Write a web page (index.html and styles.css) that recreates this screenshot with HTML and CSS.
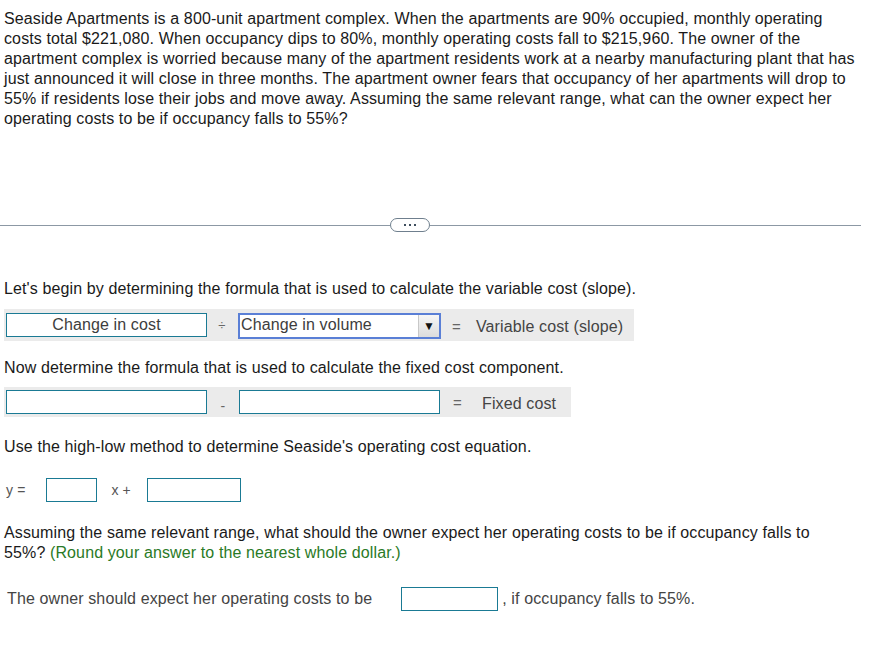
FILE: index.html
```html
<!DOCTYPE html>
<html>
<head>
<meta charset="utf-8">
<link rel="stylesheet" href="styles.css">
</head>
<body>
<div class="page">
  <p class="problem">Seaside Apartments is a 800-unit apartment complex. When the apartments are 90% occupied, monthly operating costs total $221,080. When occupancy dips to 80%, monthly operating costs fall to $215,960. The owner of the apartment complex is worried because many of the apartment residents work at a nearby manufacturing plant that has just announced it will close in three months. The apartment owner fears that occupancy of her apartments will drop to 55% if residents lose their jobs and move away. Assuming the same relevant range, what can the owner expect her operating costs to be if occupancy falls to 55%?</p>

  <div class="sep">
    <div class="sep-line"></div>
    <div class="pill"><span></span><span></span><span></span></div>
    <div class="sep-line grow"></div>
  </div>

  <p class="q q1">Let's begin by determining the formula that is used to calculate the variable cost (slope).</p>
  <div class="row row1">
    <div class="box box-cost">Change in cost</div>
    <span class="op op-div">÷</span>
    <div class="select">
      <span class="select-text">Change in volume</span>
      <span class="select-arrow">▼</span>
    </div>
    <span class="op op-eq">=</span>
    <span class="result">Variable cost (slope)</span>
  </div>

  <p class="q q2">Now determine the formula that is used to calculate the fixed cost component.</p>
  <div class="row row2">
    <div class="box box-wide"></div>
    <span class="op op-minus">-</span>
    <div class="box box-wide"></div>
    <span class="op op-eq2">=</span>
    <span class="result result2">Fixed cost</span>
  </div>

  <p class="q q3">Use the high-low method to determine Seaside's operating cost equation.</p>
  <div class="eq">
    <span class="small">y =</span>
    <div class="box box-a"></div>
    <span class="small xplus">x +</span>
    <div class="box box-b"></div>
  </div>

  <p class="q q4">Assuming the same relevant range, what should the owner expect her operating costs to be if occupancy falls to 55%? <span class="green">(Round your answer to the nearest whole dollar.)</span></p>

  <div class="final">
    <span class="gray">The owner should expect her operating costs to be</span>
    <div class="box box-final"></div>
    <span class="gray">, if occupancy falls to 55%.</span>
  </div>
</div>
</body>
</html>
```

FILE: styles.css
```css
* { box-sizing: border-box; }
body {
  margin: 0;
  background: #fff;
  font-family: "Liberation Sans", Arial, sans-serif;
  font-size: 16px;
  letter-spacing: 0.12px;
  color: #1a1a1a;
}
.page {
  padding: 9px 0 0 4px;
  width: 874px;
}
p { margin: 0; line-height: 20px; }
.problem { width: 856px; }

.sep {
  display: flex;
  align-items: center;
  margin-top: 89px;
  margin-left: -4px;
  width: 861px;
  height: 14px;
}
.sep-line { height: 1px; background: #8c98a4; width: 390px; }
.sep-line.grow { flex: 1; width: auto; }
.pill {
  width: 40px;
  height: 14px;
  border: 1px solid #6f7f8e;
  border-radius: 7px;
  background: #fff;
  display: flex;
  align-items: center;
  justify-content: center;
  gap: 3px;
}
.pill span { width: 2px; height: 2px; background: #3f4f5f; }

.q1 { margin-top: 47px; }
.row {
  display: flex;
  align-items: center;
  background: #ebebeb;
  margin-top: 10px;
  height: 32px;
  padding-left: 2px;
}
.row1 { width: 630px; }
.row2 { width: 567px; height: 30px; margin-top: 9px; }
.box {
  border: 1px solid #1a7a94;
  background: #fff;
  height: 24px;
}
.box-cost {
  width: 201px;
  text-align: center;
  color: #3d3d3d;
  line-height: 22px;
}
.op { color: #666; font-size: 14px; }
.op-div { margin-left: 3px; width: 24px; text-align: center; font-size: 13px; }
.select {
  display: flex;
  align-items: stretch;
  width: 203px;
  height: 26px;
  border: 2px solid #5a7fd6;
  background: #fff;
  margin-top: 2px;
  margin-left: 4px;
}
.select-text { flex: 1; color: #3d3d3d; line-height: 20px; padding-left: 1px; }
.select-arrow {
  width: 21px;
  background: linear-gradient(#f6f6f6, #dcdcdc);
  border-left: 1px solid #c8c8c8;
  font-size: 12px;
  color: #111;
  text-align: center;
  line-height: 22px;
}
.op-eq { margin-left: 11px; width: 14px; font-size: 15px; margin-top: 3px; }
.result { margin-left: 10px; color: #444; margin-top: 3px; }

.q2 { margin-top: 17px; }
.box-wide { width: 201px; height: 24px; }
.op-minus { width: 32px; text-align: center; margin-left: 0; margin-top: 8px; }
.op-eq2 { margin-left: 13px; width: 14px; font-size: 15px; }
.result2 { margin-left: 15px; }

.q3 { margin-top: 20px; }
.eq {
  display: flex;
  align-items: center;
  margin-top: 21px;
  padding-left: 2px;
  height: 24px;
}
.small { font-size: 14px; color: #555; }
.box-a { width: 51px; margin-left: 21px; }
.xplus { margin-left: 14px; }
.box-b { width: 94px; margin-left: 16px; }

.q4 { margin-top: 21px; width: 820px; color: #1a1a1a; }
.green { color: #2a7a26; }

.final {
  display: flex;
  align-items: center;
  margin-top: 24px;
  padding-left: 3px;
  height: 24px;
}
.gray { color: #444; }
.box-final { width: 97px; margin-left: 29px; margin-right: 4px; }
```
